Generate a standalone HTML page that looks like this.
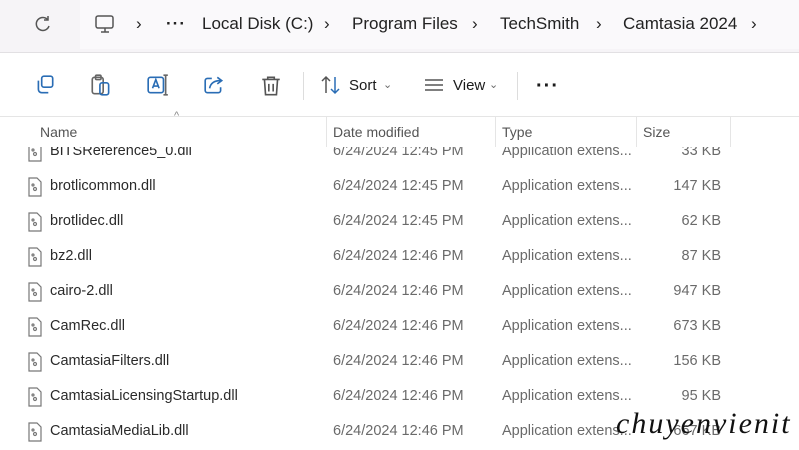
<!DOCTYPE html><html><head><style>
body{margin:0;width:799px;height:450px;overflow:hidden;background:#fff;font-family:"Liberation Sans",sans-serif;position:relative;color:#1b1b1b}
.top{position:absolute;left:0;top:0;width:799px;height:52px;background:#f6f4f7;border-bottom:1px solid #e2e0e3}
.bc{position:absolute;left:80px;top:0;width:719px;height:49px;background:#faf9fb}
.t{position:absolute;white-space:nowrap}
.crumb{font-size:17px;top:14px;color:#222}
.hdr{font-size:14px;color:#555;top:124px}
.row{font-size:14.5px;color:#2a2a2a}
.gray{color:#6a6a6a}
.vline{position:absolute;top:117px;width:1px;height:30px;background:#e5e5e5}
</style></head><body>
<div class="top"></div><div class="bc"></div>
<svg style="position:absolute;left:33px;top:14px" width="20" height="20" viewBox="0 0 20 20"><path d="M15 6 A6.5 6.5 0 1 0 16 12" fill="none" stroke="#555" stroke-width="1.5"/><path d="M15 2v4h-4" fill="none" stroke="#555" stroke-width="1.5"/></svg>
<svg style="position:absolute;left:94px;top:13px" width="22" height="22" viewBox="0 0 22 22"><rect x="2" y="3" width="17" height="12" rx="2" fill="none" stroke="#555" stroke-width="1.5"/><path d="M7 19h8M11 15v4" stroke="#555" stroke-width="1.5"/></svg>
<div class="t crumb" style="left:136px">›</div>
<div class="t crumb" style="left:166px;font-weight:bold;letter-spacing:1px">···</div>
<div class="t crumb" style="left:202px">Local Disk (C:)</div>
<div class="t crumb" style="left:324px">›</div>
<div class="t crumb" style="left:352px">Program Files</div>
<div class="t crumb" style="left:472px">›</div>
<div class="t crumb" style="left:500px">TechSmith</div>
<div class="t crumb" style="left:596px">›</div>
<div class="t crumb" style="left:623px">Camtasia 2024</div>
<div class="t crumb" style="left:751px">›</div>
<svg style="position:absolute;left:34px;top:74px" width="22" height="22" viewBox="0 0 20 20" fill="none" stroke="#2a6db5" stroke-width="1.5"><rect x="7" y="2" width="10" height="10" rx="2"/><path d="M4 6v8a3 3 0 0 0 3 3h6"/></svg>
<svg style="position:absolute;left:90px;top:73px" width="22" height="24" viewBox="0 0 20 22" fill="none" stroke="#666" stroke-width="1.5"><rect x="2" y="4" width="10" height="15" rx="2"/><rect x="5" y="2" width="5" height="4" rx="1"/><rect x="9" y="9" width="8" height="11" rx="2" stroke="#2a6db5"/></svg>
<svg style="position:absolute;left:146px;top:73px" width="24" height="24" viewBox="0 0 22 22" fill="none" stroke="#2a6db5" stroke-width="1.5"><rect x="2" y="4" width="14" height="14" rx="2"/><path d="M6 14l3-8 3 8M7 12h4"/><path d="M18 2v18M16 2h4M16 20h4" stroke="#666"/></svg>
<svg style="position:absolute;left:203px;top:74px" width="22" height="22" viewBox="0 0 20 20" fill="none" stroke="#2a6db5" stroke-width="1.5"><path d="M8 4H4a2 2 0 0 0-2 2v9a2 2 0 0 0 2 2h10a2 2 0 0 0 2-2v-3"/><path d="M6 13c1-5 5-7 10-7M13 3l4 3-4 3"/></svg>
<svg style="position:absolute;left:260px;top:74px" width="22" height="24" viewBox="0 0 20 22" fill="none" stroke="#555" stroke-width="1.5"><path d="M2 5h16M7 5V3h6v2M4 5l1 14h10l1-14M8 9v7M12 9v7"/></svg>
<div style="position:absolute;left:303px;top:72px;width:1px;height:28px;background:#ddd"></div>
<svg style="position:absolute;left:320px;top:75px" width="22" height="20" viewBox="0 0 22 20" fill="none" stroke="#2a6db5" stroke-width="1.5"><path d="M6 18V2M2 6l4-4 4 4" stroke="#555"/><path d="M15 2v16M11 14l4 4 4-4"/></svg>
<div class="t" style="left:349px;top:77px;font-size:15px">Sort</div><div class="t gray" style="left:383px;top:78px;font-size:11px">⌄</div>
<svg style="position:absolute;left:424px;top:78px" width="20" height="14" viewBox="0 0 20 14" stroke="#555" stroke-width="1.5"><path d="M1 2h18M1 7h18M1 12h18"/></svg>
<div class="t" style="left:453px;top:77px;font-size:15px">View</div><div class="t gray" style="left:489px;top:78px;font-size:11px">⌄</div>
<div style="position:absolute;left:517px;top:72px;width:1px;height:28px;background:#ddd"></div>
<div class="t" style="left:536px;top:75px;font-size:20px;font-weight:bold;letter-spacing:1px">···</div>
<div id="rows"></div>
<script>
var d=[["BITSReference5_0.dll","12:45","33 KB"],["brotlicommon.dll","12:45","147 KB"],["brotlidec.dll","12:45","62 KB"],["bz2.dll","12:46","87 KB"],["cairo-2.dll","12:46","947 KB"],["CamRec.dll","12:46","673 KB"],["CamtasiaFilters.dll","12:46","156 KB"],["CamtasiaLicensingStartup.dll","12:46","95 KB"],["CamtasiaMediaLib.dll","12:46","667 KB"]];
var h="";d.forEach(function(r,i){var y=143+i*35;
h+='<div class="t row" style="left:50px;top:'+y+'px;">'+r[0]+'</div>';
h+='<svg style="position:absolute;left:27px;top:'+(y-1)+'px" width="16" height="20" viewBox="0 0 16 20" fill="none" stroke="#777" stroke-width="1.2"><path d="M2 1h8l4 4v14H2z"/><circle cx="8" cy="12" r="1.5"/><circle cx="6" cy="8" r="1"/></svg>';
h+='<div class="t row gray" style="left:333px;top:'+y+'px">6/24/2024 '+r[1]+' PM</div>';
h+='<div class="t row gray" style="left:502px;top:'+y+'px">Application extens...</div>';
h+='<div class="t row gray" style="right:78px;top:'+y+'px">'+r[2]+'</div>';});
document.getElementById("rows").innerHTML=h;
</script>
<div style="position:absolute;left:0;top:117px;width:799px;height:30px;background:#fff;z-index:1"></div>
<div style="position:absolute;left:0;top:116px;width:799px;height:1px;background:#e5e5e5;z-index:2"></div>
<div style="z-index:3;position:relative">
<div class="t hdr" style="left:40px">Name</div>
<div class="vline" style="left:326px"></div><div class="t hdr" style="left:333px">Date modified</div>
<div class="vline" style="left:495px"></div><div class="t hdr" style="left:502px">Type</div>
<div class="vline" style="left:636px"></div><div class="t hdr" style="left:643px">Size</div>
<div class="vline" style="left:730px"></div>
<div class="t" style="left:174px;top:110px;font-size:11px;color:#888">^</div>
</div>
<div class="t" style="left:616px;top:407px;font-family:'Liberation Serif',serif;font-style:italic;font-size:30px;letter-spacing:2px;color:#111;z-index:4">chuyenvienit</div>
</body></html>
